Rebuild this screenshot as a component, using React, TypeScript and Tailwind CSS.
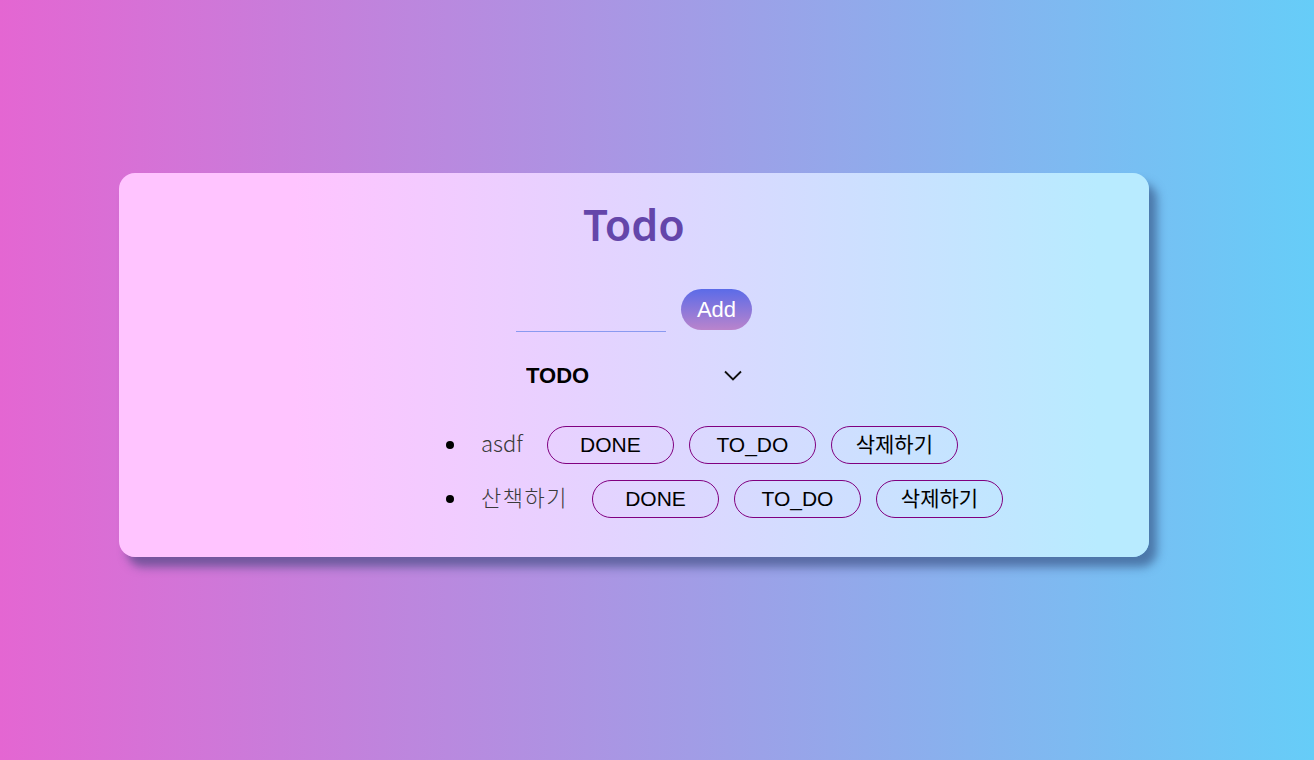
import React, { useState } from "react";

type Status = "TODO" | "DONE";

interface Todo {
  id: number;
  text: string;
  status: Status;
}

const initial: Todo[] = [
  { id: 1, text: "asdf", status: "TODO" },
  { id: 2, text: "산책하기", status: "TODO" },
];

const btn =
  "w-[127px] h-[38px] rounded-full border border-[#800080] bg-transparent text-[21px] text-black font-['Liberation_Sans','Noto_Sans_CJK_KR',sans-serif] flex items-center justify-center";

const hasHangul = (s: string) => /[\uac00-\ud7a3]/.test(s);

export default function App() {
  const [todos, setTodos] = useState<Todo[]>(initial);
  const [value, setValue] = useState("");
  const [filter, setFilter] = useState<Status>("TODO");

  const add = () => {
    if (!value.trim()) return;
    setTodos([...todos, { id: Date.now(), text: value, status: "TODO" }]);
    setValue("");
  };

  return (
    <div className="min-h-screen w-full pt-[173px] bg-[linear-gradient(to_right,#e466d2,#66cdf8)] font-['Noto_Sans','Noto_Sans_CJK_KR',sans-serif]">
      <div className="ml-[119px] w-[1030px] h-[384px] rounded-[16px] bg-[linear-gradient(to_right,#ffc4ff_17%,#b8ebff_95%)] shadow-[8px_10px_10px_rgba(40,60,110,0.55)] flex flex-col items-center">
        <h1 className="mt-[28px] text-[43px] leading-[48px] font-semibold text-[#6446aa]">
          Todo
        </h1>

        <div className="mt-[40px] flex items-end gap-[15px]">
          <input
            value={value}
            onChange={(e) => setValue(e.target.value)}
            className="w-[150px] h-[43px] bg-transparent border-b border-[#8a9af0] outline-none px-1"
          />
          <button
            onClick={add}
            className="w-[71px] h-[41px] mb-[2px] rounded-full bg-[linear-gradient(to_bottom,#5b6be8,#ba84cc)] text-white text-[22px] font-['Liberation_Sans',sans-serif] flex items-center justify-center"
          >
            Add
          </button>
        </div>

        <div className="mt-[22px] w-[236px] h-[42px] relative flex items-center">
          <select
            value={filter}
            onChange={(e) => setFilter(e.target.value as Status)}
            className="appearance-none w-full h-full bg-transparent pl-[10px] text-[22px] font-bold text-black font-['Liberation_Sans',sans-serif] outline-none"
          >
            <option value="TODO">TODO</option>
            <option value="DONE">DONE</option>
          </select>
          <svg
            className="absolute right-[10px] top-[16px] pointer-events-none"
            width="18"
            height="11"
            viewBox="0 0 18 11"
            fill="none"
          >
            <path d="M1 1.5L9 9.5L17 1.5" stroke="#111" strokeWidth="1.8" />
          </svg>
        </div>

        <ul className="mt-[30px] ml-[327px] self-start flex flex-col gap-[16px]">
          {todos.map((t) => (
            <li key={t.id} className="flex items-center text-[22px]">
              <span className="w-[8px] h-[8px] rounded-full bg-black mr-[27px]" />
              <span
                className={`mr-[24px] font-light text-[#3a3a3a] font-['Noto_Sans_CJK_KR',sans-serif] -mt-[5px] ${
                  hasHangul(t.text) ? "tracking-[1.5px]" : "tracking-normal"
                }`}
              >
                {t.text}
              </span>
              <div className="flex items-center gap-[15px]">
                <button className={btn}>DONE</button>
                <button className={btn}>TO_DO</button>
                <button
                  className={btn}
                  onClick={() => setTodos(todos.filter((x) => x.id !== t.id))}
                >
                  삭제하기
                </button>
              </div>
            </li>
          ))}
        </ul>
      </div>
    </div>
  );
}
